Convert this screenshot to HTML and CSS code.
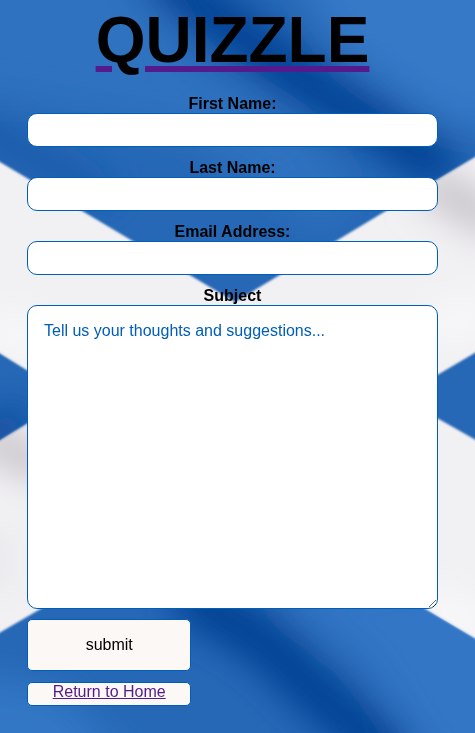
FILE: index.html
```html
<!DOCTYPE html>
<html lang="en">
<head>
<meta charset="utf-8">
<meta name="viewport" content="width=device-width, initial-scale=1">
<title>Quizzle</title>
<link rel="stylesheet" href="styles.css">
</head>
<body>
<svg class="flag" viewBox="0 0 475 733" preserveAspectRatio="xMidYMin slice" aria-hidden="true">
  <defs>
    <filter id="fold" filterUnits="userSpaceOnUse" x="-100" y="-100" width="675" height="933"><feGaussianBlur stdDeviation="18"/></filter>
    <filter id="edge"><feGaussianBlur stdDeviation="0.8"/></filter>
    <clipPath id="cloth"><path d="M-20 150L235 302L495 145V341L400 397L495 451V650L235 496L-20 644V453L70 397L-20 341Z"/></clipPath>
  </defs>
  <rect width="475" height="733" fill="#2668b6"/>
  <g filter="url(#fold)" fill="none">
    <path d="M270 -60H540V140L440 120L350 60Z" fill="#3479c7"/>
    <path d="M-60 -60H130L190 60L300 130L350 190L330 230L180 130L60 110L-60 90Z" fill="#2d72c0"/>
    <path d="M150 -30L240 35L310 85L370 120L450 175" stroke="#003f93" stroke-width="44"/>
    <path d="M-30 125L50 165L110 195" stroke="#1557a8" stroke-width="24"/>
    <path d="M270 590L540 560V790H450L360 660Z" fill="#3276c5"/>
    <path d="M-60 670L60 690L150 790H-60Z" fill="#3277c5"/>
    <path d="M180 590L265 642L315 690L400 765" stroke="#003f93" stroke-width="48"/>
    <path d="M-20 445L25 415" stroke="#08479a" stroke-width="30"/>
  </g>
  <path filter="url(#edge)" fill="#f1f0f3" d="M-20 150L235 302L495 145V341L400 397L495 451V650L235 496L-20 644V453L70 397L-20 341Z"/>
  <g clip-path="url(#cloth)">
    <g filter="url(#fold)" fill="none">
      <path d="M425 180L500 225" stroke="#c6c2c8" stroke-width="36"/>
      <path d="M-20 435L50 470" stroke="#c4c0c6" stroke-width="32"/>
      <path d="M-10 325L50 345M425 330L490 310M420 600L490 630" stroke="#fafafa" stroke-width="28"/>
      <path d="M-10 530V590" stroke="#e8e8ec" stroke-width="40"/>
    </g>
  </g>
</svg>
<main class="page">
  <h1 class="brand"><a class="brand-link" href="#">QUIZZLE</a></h1>
  <form class="form">
    <div class="field">
      <label for="first-name">First Name:</label>
      <input class="control" type="text" id="first-name">
    </div>
    <div class="field">
      <label for="last-name">Last Name:</label>
      <input class="control" type="text" id="last-name">
    </div>
    <div class="field">
      <label for="email">Email Address:</label>
      <input class="control" type="text" id="email">
    </div>
    <div class="field">
      <label for="subject">Subject</label>
      <textarea class="control message" id="subject" placeholder="Tell us your thoughts and suggestions..."></textarea>
    </div>
    <div class="actions">
      <button class="button submit" type="button">submit</button>
      <div class="button home"><a href="#">Return to Home</a></div>
    </div>
  </form>
</main>
</body>
</html>
```
FILE: styles.css
```css
* {
  box-sizing: border-box;
}

body {
  margin: 0;
  min-height: 100vh;
  background: #2769b7;
  font-family: "Liberation Sans", Arial, sans-serif;
  font-size: 16px;
  line-height: 18px;
  color: #000;
}

.flag {
  position: fixed;
  inset: 0;
  width: 100%;
  height: 100%;
  z-index: -1;
}

.page {
  padding: 4px 37px 24px 27px;
}

.brand {
  margin: 0 0 19px;
  font-size: 64px;
  line-height: 72px;
  text-align: center;
}

.brand-link {
  color: #000;
  text-decoration: underline;
  text-decoration-color: #551a8b;
}

.form {
  display: flex;
  flex-direction: column;
  gap: 10px;
}

.field {
  display: flex;
  flex-direction: column;
}

.field + .field {
  margin-top: 2px;
}

.field label {
  font-weight: bold;
  text-align: center;
}

.control {
  width: 100%;
  height: 34px;
  margin: 0;
  padding: 0 16px;
  border: 1px solid #005eb8;
  border-radius: 10px;
  background: #fff;
  color: #005eb8;
  font: inherit;
}

.message {
  height: 304px;
  padding: 16px;
  resize: both;
}

.message::placeholder {
  color: #005eb8;
  opacity: 1;
}

.actions {
  display: flex;
  flex-direction: column;
  align-items: flex-start;
  gap: 11px;
}

.button {
  width: 40%;
  border: 1px solid #005eb8;
  border-radius: 5px;
  background: #fcf8f6;
  color: #000;
  font: inherit;
  text-align: center;
}

.submit {
  height: 52px;
}

.home {
  height: 24px;
}

.home a {
  color: #551a8b;
}
```
